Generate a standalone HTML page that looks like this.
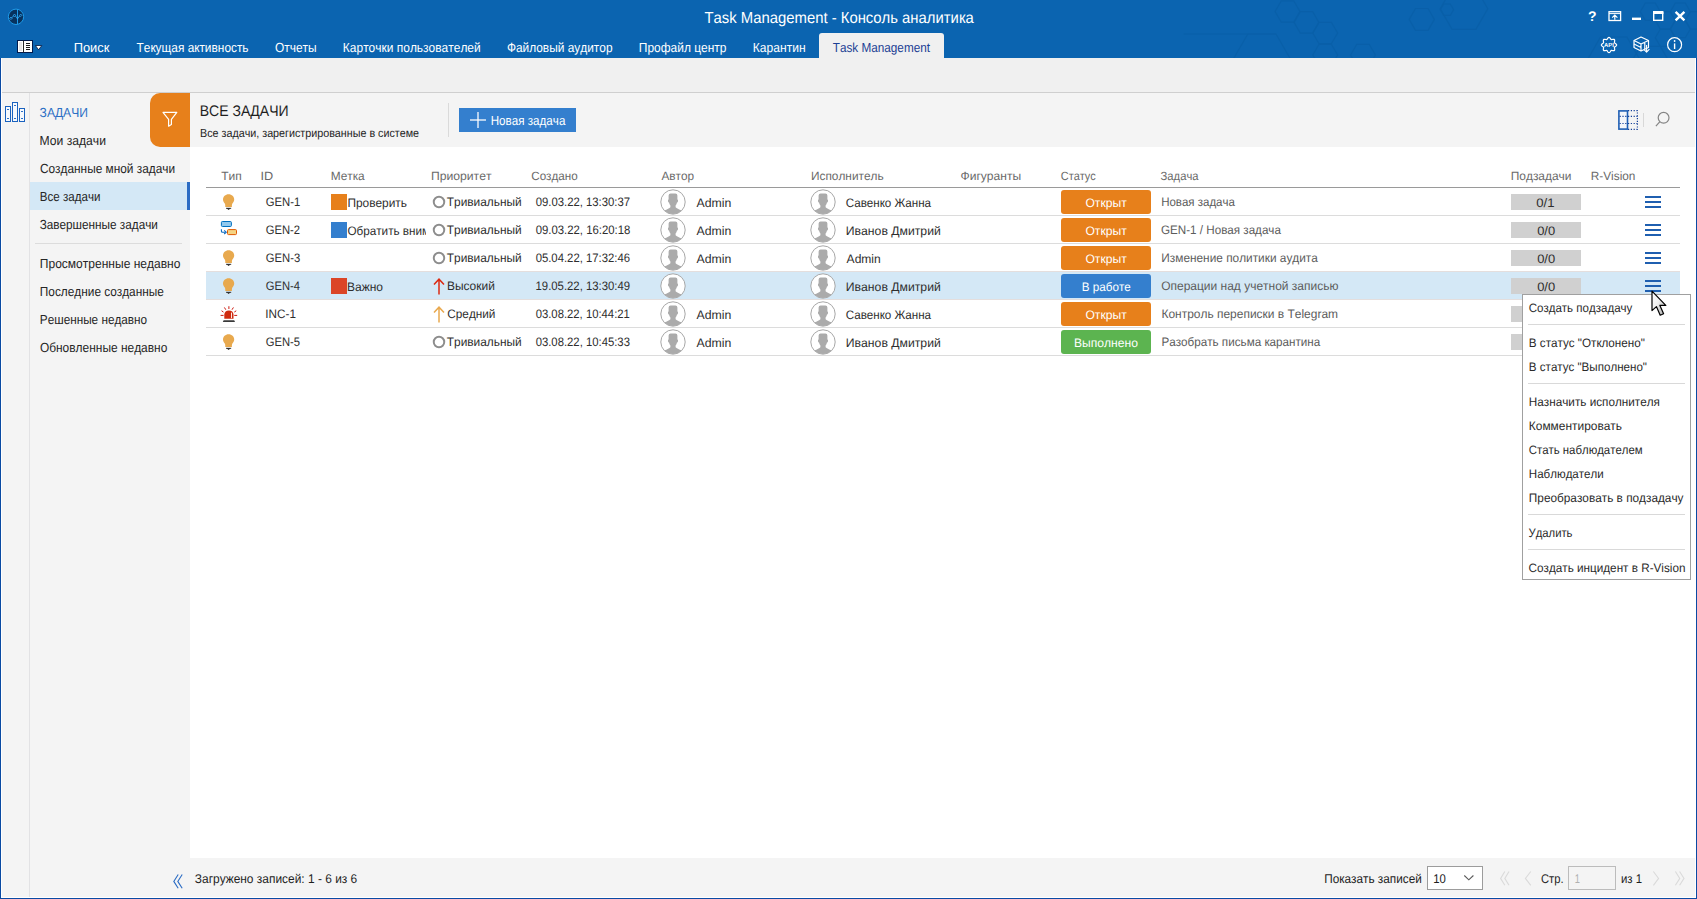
<!DOCTYPE html>
<html lang="ru">
<head>
<meta charset="utf-8">
<title>Task Management - Консоль аналитика</title>
<style>
*{box-sizing:border-box;margin:0;padding:0}
html,body{width:1697px;height:899px;overflow:hidden;background:#f4f4f4}
body{position:relative;font-family:"Liberation Sans",sans-serif;font-kerning:none;text-rendering:geometricPrecision;-webkit-font-smoothing:antialiased}
.a{position:absolute}
.t{position:absolute;white-space:nowrap;line-height:1;transform-origin:0 0;display:block}
svg{position:absolute;overflow:visible}
#hdr{left:0;top:0;width:1697px;height:58px;background:#0b64b0;overflow:hidden}
#ribbon{left:2px;top:58px;width:1693px;height:34px;background:#f0f0f0}
#ribline{left:2px;top:92px;width:1693px;height:1px;background:#cfcfcf}
#main{left:2px;top:93px;width:1693px;height:804px;background:#f4f4f4}
#white{left:190px;top:147px;width:1505px;height:711px;background:#fff}
#bl{left:0;top:58px;width:1px;height:841px;background:#0a4aa3}
#br{left:1696px;top:58px;width:1px;height:841px;background:#0a4aa3}
#bb{left:0;top:898px;width:1697px;height:1px;background:#0a4aa3}
#wl{left:1px;top:58px;width:1px;height:840px;background:#fff}
#wr{left:1695px;top:58px;width:1px;height:840px;background:#fff}
#wb{left:1px;top:897px;width:1695px;height:1px;background:#fff}
#tab{left:819px;top:33px;width:125px;height:25px;background:#f0f0f0;border-radius:3px 3px 0 0}
#vsep{left:29px;top:93px;width:1px;height:804px;background:#e2e2e4}
#sel{left:30px;top:182px;width:157px;height:28px;background:#d4e8f6}
#selbar{left:187px;top:182px;width:3px;height:28px;background:#2b6cc4}
#sdiv{left:35px;top:243px;width:147px;height:1px;background:#dcdcdc}
#filter{left:150px;top:93px;width:40px;height:54px;background:#e7801b;border-radius:10px 0 0 10px}
#hsep{left:448px;top:103px;width:1px;height:34px;background:#dadada}
#newbtn{left:459px;top:108px;width:117px;height:24px;background:#347fce}
#tsep{left:1643px;top:113px;width:1px;height:14px;background:#d8d8d8}
.hl{left:206px;width:1474px;height:1px;background:#dcdcdc}
#hline{left:206px;top:187px;width:1474px;height:1px;background:#9a9a9a}
#rowsel{left:206px;top:271px;width:1474px;height:29px;background:#d4e8f6}
.bdg{left:1061px;width:90px;height:24px;border-radius:3px}
.sq{left:331px;width:16px;height:16px}
.bar{left:1511px;width:70px;height:16px;background:#d0d0d0}
.hb{left:1645px;width:16px;height:2px;background:#1f5fb0}
#menu{left:1522px;top:294px;width:169px;height:286px;background:#fff;border:1px solid #a0a0a0}
.ms{left:1528px;width:157px;height:1px;background:#d9d9d9}
#selbox{left:1427px;top:866px;width:56px;height:24px;background:#fff;border:1px solid #9c9c9c}
#pgbox{left:1568px;top:866px;width:48px;height:24px;background:#f4f4f4;border:1px solid #bcbcbc}
</style>
</head>
<body>
<div id="hdr" class="a">
<svg width="1697" height="58" viewBox="0 0 1697 58" style="left:0;top:0" fill="none" stroke="#075a9f" stroke-width="1.2" opacity=".4">
<polygon points="1275.1,11.5 1281.3,0.8 1293.7,0.8 1299.9,11.5 1293.7,22.2 1281.3,22.2"/>
<polygon points="1294.1,22.4 1300.3,11.7 1312.7,11.7 1318.9,22.4 1312.7,33.1 1300.3,33.1"/>
<polygon points="1312.8,33.0 1319.0,22.3 1331.4,22.3 1337.6,33.0 1331.4,43.7 1319.0,43.7"/>
<polygon points="1312.8,55.0 1319.0,44.3 1331.4,44.3 1337.6,55.0 1331.4,65.7 1319.0,65.7"/>
<polygon points="1350.6,55.0 1356.8,44.3 1369.2,44.3 1375.4,55.0 1369.2,65.7 1356.8,65.7"/>
<polygon points="1233.7,58.4 1247.8,34.0 1276.0,34.0 1290.1,58.4 1276.0,82.8 1247.8,82.8"/>
<polygon points="1409.2,19.4 1415.5,8.5 1428.1,8.5 1434.4,19.4 1428.1,30.3 1415.5,30.3"/>
<polygon points="1440.2,8.8 1452.1,-11.9 1475.9,-11.9 1487.8,8.8 1475.9,29.4 1452.1,29.4"/>
<polygon points="1440.4,9.7 1443.7,4.0 1450.3,4.0 1453.6,9.7 1450.3,15.4 1443.7,15.4"/>
<polygon points="1640.3,11.7 1645.3,3.0 1655.3,3.0 1660.3,11.7 1655.3,20.4 1645.3,20.4"/>
<polygon points="1655.3,20.4 1660.3,11.7 1670.3,11.7 1675.3,20.4 1670.3,29.1 1660.3,29.1"/>
<polygon points="1670.3,11.7 1675.3,3.0 1685.3,3.0 1690.3,11.7 1685.3,20.4 1675.3,20.4"/>
<polygon points="1670.3,29.0 1675.3,20.3 1685.3,20.3 1690.3,29.0 1685.3,37.7 1675.3,37.7"/>
<polygon points="1655.3,37.7 1660.3,29.0 1670.3,29.0 1675.3,37.7 1670.3,46.4 1660.3,46.4"/>
<polygon points="1685.3,20.4 1690.3,11.7 1700.3,11.7 1705.3,20.4 1700.3,29.1 1690.3,29.1"/>
<polygon points="1587.4,59.8 1600.5,37.0 1626.9,37.0 1640.0,59.8 1626.9,82.6 1600.5,82.6"/>
<polygon points="1630.3,63.7 1640.3,46.4 1660.3,46.4 1670.3,63.7 1660.3,81.0 1640.3,81.0"/>
<line x1="1183.6" y1="34" x2="1276" y2="34"/>
</svg>
</div>
<div id="tab" class="a"></div>
<!-- app logo -->
<svg width="18" height="18" viewBox="0 0 18 18" style="left:7px;top:8px">
<circle cx="9" cy="8.8" r="7.7" fill="#07325e" stroke="#1e9bea" stroke-width="1"/>
<line x1="10.5" y1="1.2" x2="10.5" y2="16.4" stroke="#1e9bea" stroke-width="1"/>
<polyline points="3.9,10.3 7.5,7.3 10.5,10.1 13.7,7.3" fill="none" stroke="#2aa6f2" stroke-width=".9"/>
<g fill="#07325e" stroke="#35b0ff" stroke-width=".8"><path d="M3.9 9.1L5.1 10.3L3.9 11.5L2.7 10.3Z"/><path d="M7.5 6.1L8.7 7.3L7.5 8.5L6.3 7.3Z"/><path d="M13.7 6.1L14.9 7.3L13.7 8.5L12.5 7.3Z"/></g>
<path d="M9.5 9.6L10.5 10.8L11.5 9.6" fill="none" stroke="#35b0ff" stroke-width=".9"/>
</svg>
<!-- quick menu icon -->
<svg width="26" height="14" viewBox="0 0 26 14" style="left:17px;top:40px">
<rect x=".5" y=".5" width="15" height="12" fill="#fff" stroke="#001a4d" stroke-width="1"/>
<rect x="2" y="2" width="3" height="9" fill="#e6e6e6"/>
<line x1="6.5" y1=".5" x2="6.5" y2="12.5" stroke="#2a2a2a" stroke-width="1"/>
<g stroke="#1a1a1a" stroke-width="1"><line x1="9" y1="3.5" x2="13" y2="3.5"/><line x1="9" y1="5.5" x2="13" y2="5.5"/><line x1="9" y1="7.5" x2="13" y2="7.5"/><line x1="9" y1="9.5" x2="13" y2="9.5"/></g>
<polygon points="18.4,5.5 24.8,5.5 21.6,9.8" fill="#fff" stroke="#00143c" stroke-width=".8"/>
</svg>
<!-- window controls -->
<svg width="100" height="12" viewBox="0 0 100 12" style="left:1587px;top:10px" fill="none" stroke="#fff">
<text x="1" y="11" font-family="Liberation Sans, sans-serif" font-weight="700" font-size="14" fill="#fff" stroke="none">?</text>
<rect x="22" y="1.7" width="11.6" height="8.8" stroke-width="1.3"/><line x1="22" y1="3.6" x2="33.6" y2="3.6" stroke-width="1"/><path d="M27.8 9.8V5.4M25.2 7.6L27.8 5L30.4 7.6" stroke-width="1.2"/>
<rect x="45" y="7.6" width="9" height="2.4" fill="#fff" stroke="none"/>
<rect x="66.7" y="2.5" width="9" height="7.8" stroke-width="1.4"/><rect x="66" y="1" width="10.4" height="3" fill="#fff" stroke="none"/>
<path d="M88.6 1.8L97.4 10.4M97.4 1.8L88.6 10.4" stroke-width="2.4"/>
</svg>
<!-- API gear -->
<svg width="18" height="18" viewBox="-9 -9 18 18" style="left:1600px;top:36px" fill="none" stroke="#fff" stroke-width="1.2">
<path d="M7.60,0.00L7.47,0.49L7.11,0.94L6.62,1.32L6.11,1.64L5.69,1.93L5.45,2.26L5.39,2.66L5.48,3.16L5.61,3.75L5.69,4.37L5.63,4.94L5.37,5.37L4.94,5.63L4.37,5.69L3.75,5.61L3.16,5.48L2.66,5.39L2.26,5.45L1.93,5.69L1.64,6.11L1.32,6.62L0.94,7.11L0.49,7.47L0.00,7.60L-0.49,7.47L-0.94,7.11L-1.32,6.62L-1.64,6.11L-1.93,5.69L-2.26,5.45L-2.66,5.39L-3.16,5.48L-3.75,5.61L-4.37,5.69L-4.94,5.63L-5.37,5.37L-5.63,4.94L-5.69,4.37L-5.61,3.75L-5.48,3.16L-5.39,2.66L-5.45,2.26L-5.69,1.93L-6.11,1.64L-6.62,1.32L-7.11,0.94L-7.47,0.49L-7.60,0.00L-7.47,-0.49L-7.11,-0.94L-6.62,-1.32L-6.11,-1.64L-5.69,-1.93L-5.45,-2.26L-5.39,-2.66L-5.48,-3.16L-5.61,-3.75L-5.69,-4.37L-5.63,-4.94L-5.37,-5.37L-4.94,-5.63L-4.37,-5.69L-3.75,-5.61L-3.16,-5.48L-2.66,-5.39L-2.26,-5.45L-1.93,-5.69L-1.64,-6.11L-1.32,-6.62L-0.94,-7.11L-0.49,-7.47L-0.00,-7.60L0.49,-7.47L0.94,-7.11L1.32,-6.62L1.64,-6.11L1.93,-5.69L2.26,-5.45L2.66,-5.39L3.16,-5.48L3.75,-5.61L4.37,-5.69L4.94,-5.63L5.37,-5.37L5.63,-4.94L5.69,-4.37L5.61,-3.75L5.48,-3.16L5.39,-2.66L5.45,-2.26L5.69,-1.93L6.11,-1.64L6.62,-1.32L7.11,-0.94L7.47,-0.49Z" stroke-linejoin="round"/>
<text x="0" y="2.1" text-anchor="middle" font-family="Liberation Sans, sans-serif" font-weight="700" font-size="5.9" fill="#fff" stroke="none">API</text>
</svg>
<!-- cube -->
<svg width="18" height="17" viewBox="0 0 18 17" style="left:1633px;top:36px" fill="none" stroke="#fff" stroke-width="1.2" stroke-linejoin="round">
<path d="M1 4.5L8 1L15.5 4.5V11.5L8 15L1 11.5Z"/><path d="M1 4.5L8 8L15.5 4.5M8 8V15M1 8L8 11.5M11.8 6.2V13.2"/>
<path d="M13.6 9V16M11 13.6L13.6 16.2L16.4 13.2" stroke-width="1.1"/>
</svg>
<!-- info -->
<svg width="16" height="16" viewBox="0 0 16 16" style="left:1667px;top:37px" fill="none" stroke="#fff">
<circle cx="7.6" cy="7.7" r="7" stroke-width="1.2"/><line x1="7.6" y1="6.4" x2="7.6" y2="12" stroke-width="1.4"/><circle cx="7.6" cy="4" r=".9" fill="#fff" stroke="none"/>
</svg>

<div id="ribbon" class="a"></div><div id="ribline" class="a"></div>
<div id="main" class="a"></div>
<div id="white" class="a"></div>
<div id="vsep" class="a"></div>
<div id="sel" class="a"></div><div id="selbar" class="a"></div><div id="sdiv" class="a"></div>
<div id="filter" class="a"></div>
<!-- sidebar bars icon -->
<svg width="22" height="21" viewBox="0 0 22 21" style="left:4px;top:102px" fill="#f6f9fd" stroke="#1a62bf" stroke-width="1.15" shape-rendering="crispEdges">
<rect x="1.5" y="4.5" width="5" height="15"/><rect x="8.5" y=".5" width="5" height="19"/><rect x="15.5" y="6.5" width="5" height="13"/>
<g stroke-width="1" stroke="#2b6fc6"><line x1="3" y1="7.5" x2="5" y2="7.5"/><line x1="10" y1="3.5" x2="12" y2="3.5"/><line x1="17" y1="9.5" x2="19" y2="9.5"/><line x1="3" y1="16.5" x2="5" y2="16.5"/><line x1="10" y1="16.5" x2="12" y2="16.5"/><line x1="17" y1="16.5" x2="19" y2="16.5"/></g>
</svg>
<!-- funnel -->
<svg width="16" height="16" viewBox="0 0 16 16" style="left:162px;top:111px" fill="none" stroke="#fff" stroke-width="1.2" stroke-linejoin="round">
<path d="M1 1.4H14.8L9.4 8.4V13.6L6.6 15.2V8.4Z"/>
</svg>
<div id="hsep" class="a"></div>
<div id="newbtn" class="a"></div>
<svg width="16" height="16" viewBox="0 0 16 16" style="left:470px;top:112px" stroke="#fff" stroke-opacity=".85" stroke-width="1.5"><line x1="8" y1="0" x2="8" y2="16"/><line x1="0" y1="8" x2="16" y2="8"/></svg>
<!-- toolbar right icons -->
<svg width="22" height="21" viewBox="0 0 22 21" style="left:1617px;top:109px" fill="none" stroke="#1f5fb4">
<rect x="1.9" y="1.9" width="8.6" height="18.2" stroke-width="1.6" fill="#f4f6fa"/>
<g stroke-width="1.2" stroke-dasharray="1.2 1.6" stroke="#14409a"><path d="M11 1.6H20.4V20.4H11"/><line x1="2.6" y1="7.4" x2="20.4" y2="7.4"/><line x1="2.6" y1="14.5" x2="20.4" y2="14.5"/></g>
</svg>
<div id="tsep" class="a"></div>
<svg width="16" height="16" viewBox="0 0 16 16" style="left:1655px;top:111px" fill="none" stroke="#858585" stroke-width="1.2"><circle cx="8.6" cy="6.8" r="5.4"/><line x1="4.7" y1="10.8" x2=".9" y2="15.1"/></svg>

<!-- table -->
<div id="hline" class="a"></div>
<div id="rowsel" class="a"></div>
<div class="a hl" style="top:215px"></div>
<div class="a hl" style="top:243px"></div>
<div class="a hl" style="top:271px;background:#e4dedd"></div>
<div class="a hl" style="top:299px;background:#e4dedd"></div>
<div class="a hl" style="top:327px"></div>
<div class="a hl" style="top:355px"></div>
<svg width="13" height="17" viewBox="0 0 13 17" style="left:222px;top:194px"><path d="M6.6 .2C3.4 .2 1 2.5 1 5.4C1 7.3 2 8.4 2.8 9.6C3.3 10.4 3.3 11.4 3.3 13H9.9C9.9 11.4 9.9 10.4 10.4 9.6C11.2 8.4 12.2 7.3 12.2 5.4C12.2 2.5 9.8 .2 6.6 .2Z" fill="#e8a94e"/><path d="M4.2 14.1H9L6.6 16.1Z" fill="#333"/><rect x="4" y="13.8" width="5.2" height=".9" fill="#333"/></svg>
<div class="a sq" style="top:194px;background:#e7801b"></div>
<svg width="14" height="14" viewBox="0 0 14 14" style="left:432px;top:195px"><circle cx="7" cy="7" r="5.25" fill="none" stroke="#8d8d8d" stroke-width="1.95"/></svg>
<svg width="26" height="26" viewBox="0 0 26 26" style="left:660.4px;top:188.5px"><defs><clipPath id="c1"><circle cx="13" cy="13" r="12"/></clipPath></defs><circle cx="13" cy="13" r="12.2" fill="#fff" stroke="#a2a2a2" stroke-width=".95"/><g clip-path="url(#c1)" fill="#ababab"><path d="M8.6 6.6Q8.6 4.6 10.6 4.6H15.4Q17.4 4.6 17.4 6.6V10.6Q18.2 10.8 18 12.2Q17.8 13.4 17 13.6Q16.6 15.6 15.6 16.4V18.2Q17 19.6 22 21.6L24 26H2L4 21.6Q9 19.6 10.4 18.2V16.4Q9.4 15.6 9 13.6Q8.2 13.4 8 12.2Q7.8 10.8 8.6 10.6Z"/></g></svg>
<svg width="26" height="26" viewBox="0 0 26 26" style="left:810.4px;top:188.5px"><defs><clipPath id="c2"><circle cx="13" cy="13" r="12"/></clipPath></defs><circle cx="13" cy="13" r="12.2" fill="#fff" stroke="#a2a2a2" stroke-width=".95"/><g clip-path="url(#c2)" fill="#ababab"><path d="M8.6 6.6Q8.6 4.6 10.6 4.6H15.4Q17.4 4.6 17.4 6.6V10.6Q18.2 10.8 18 12.2Q17.8 13.4 17 13.6Q16.6 15.6 15.6 16.4V18.2Q17 19.6 22 21.6L24 26H2L4 21.6Q9 19.6 10.4 18.2V16.4Q9.4 15.6 9 13.6Q8.2 13.4 8 12.2Q7.8 10.8 8.6 10.6Z"/></g></svg>
<div class="a bdg" style="top:190px;background:#e7801b"></div>
<div class="a bar" style="top:194px"></div>
<div class="a hb" style="top:196px"></div>
<div class="a hb" style="top:201px"></div>
<div class="a hb" style="top:206px"></div>
<svg width="18" height="15" viewBox="0 0 18 15" style="left:220px;top:221px"><rect x="1.4" y=".5" width="10" height="5" rx="1" fill="#93c9ed" stroke="#0070c0" stroke-width="1"/><rect x="7.5" y="8.6" width="9" height="5" rx="1" fill="#f5d484" stroke="#e05a00" stroke-width="1"/><path d="M1.4 8.2V10.2Q1.4 11.2 2.6 11.2H5" fill="none" stroke="#0a6ac0" stroke-width="1.1"/><path d="M4.2 9.4L6.2 11.2L4.2 13" fill="none" stroke="#0a6ac0" stroke-width="1.1"/></svg>
<div class="a sq" style="top:222px;background:#347fce"></div>
<svg width="14" height="14" viewBox="0 0 14 14" style="left:432px;top:223px"><circle cx="7" cy="7" r="5.25" fill="none" stroke="#8d8d8d" stroke-width="1.95"/></svg>
<svg width="26" height="26" viewBox="0 0 26 26" style="left:660.4px;top:216.5px"><defs><clipPath id="c3"><circle cx="13" cy="13" r="12"/></clipPath></defs><circle cx="13" cy="13" r="12.2" fill="#fff" stroke="#a2a2a2" stroke-width=".95"/><g clip-path="url(#c3)" fill="#ababab"><path d="M8.6 6.6Q8.6 4.6 10.6 4.6H15.4Q17.4 4.6 17.4 6.6V10.6Q18.2 10.8 18 12.2Q17.8 13.4 17 13.6Q16.6 15.6 15.6 16.4V18.2Q17 19.6 22 21.6L24 26H2L4 21.6Q9 19.6 10.4 18.2V16.4Q9.4 15.6 9 13.6Q8.2 13.4 8 12.2Q7.8 10.8 8.6 10.6Z"/></g></svg>
<svg width="26" height="26" viewBox="0 0 26 26" style="left:810.4px;top:216.5px"><defs><clipPath id="c4"><circle cx="13" cy="13" r="12"/></clipPath></defs><circle cx="13" cy="13" r="12.2" fill="#fff" stroke="#a2a2a2" stroke-width=".95"/><g clip-path="url(#c4)" fill="#ababab"><path d="M8.6 6.6Q8.6 4.6 10.6 4.6H15.4Q17.4 4.6 17.4 6.6V10.6Q18.2 10.8 18 12.2Q17.8 13.4 17 13.6Q16.6 15.6 15.6 16.4V18.2Q17 19.6 22 21.6L24 26H2L4 21.6Q9 19.6 10.4 18.2V16.4Q9.4 15.6 9 13.6Q8.2 13.4 8 12.2Q7.8 10.8 8.6 10.6Z"/></g></svg>
<div class="a bdg" style="top:218px;background:#e7801b"></div>
<div class="a bar" style="top:222px"></div>
<div class="a hb" style="top:224px"></div>
<div class="a hb" style="top:229px"></div>
<div class="a hb" style="top:234px"></div>
<svg width="13" height="17" viewBox="0 0 13 17" style="left:222px;top:250px"><path d="M6.6 .2C3.4 .2 1 2.5 1 5.4C1 7.3 2 8.4 2.8 9.6C3.3 10.4 3.3 11.4 3.3 13H9.9C9.9 11.4 9.9 10.4 10.4 9.6C11.2 8.4 12.2 7.3 12.2 5.4C12.2 2.5 9.8 .2 6.6 .2Z" fill="#e8a94e"/><path d="M4.2 14.1H9L6.6 16.1Z" fill="#333"/><rect x="4" y="13.8" width="5.2" height=".9" fill="#333"/></svg>
<svg width="14" height="14" viewBox="0 0 14 14" style="left:432px;top:251px"><circle cx="7" cy="7" r="5.25" fill="none" stroke="#8d8d8d" stroke-width="1.95"/></svg>
<svg width="26" height="26" viewBox="0 0 26 26" style="left:660.4px;top:244.5px"><defs><clipPath id="c5"><circle cx="13" cy="13" r="12"/></clipPath></defs><circle cx="13" cy="13" r="12.2" fill="#fff" stroke="#a2a2a2" stroke-width=".95"/><g clip-path="url(#c5)" fill="#ababab"><path d="M8.6 6.6Q8.6 4.6 10.6 4.6H15.4Q17.4 4.6 17.4 6.6V10.6Q18.2 10.8 18 12.2Q17.8 13.4 17 13.6Q16.6 15.6 15.6 16.4V18.2Q17 19.6 22 21.6L24 26H2L4 21.6Q9 19.6 10.4 18.2V16.4Q9.4 15.6 9 13.6Q8.2 13.4 8 12.2Q7.8 10.8 8.6 10.6Z"/></g></svg>
<svg width="26" height="26" viewBox="0 0 26 26" style="left:810.4px;top:244.5px"><defs><clipPath id="c6"><circle cx="13" cy="13" r="12"/></clipPath></defs><circle cx="13" cy="13" r="12.2" fill="#fff" stroke="#a2a2a2" stroke-width=".95"/><g clip-path="url(#c6)" fill="#ababab"><path d="M8.6 6.6Q8.6 4.6 10.6 4.6H15.4Q17.4 4.6 17.4 6.6V10.6Q18.2 10.8 18 12.2Q17.8 13.4 17 13.6Q16.6 15.6 15.6 16.4V18.2Q17 19.6 22 21.6L24 26H2L4 21.6Q9 19.6 10.4 18.2V16.4Q9.4 15.6 9 13.6Q8.2 13.4 8 12.2Q7.8 10.8 8.6 10.6Z"/></g></svg>
<div class="a bdg" style="top:246px;background:#e7801b"></div>
<div class="a bar" style="top:250px"></div>
<div class="a hb" style="top:252px"></div>
<div class="a hb" style="top:257px"></div>
<div class="a hb" style="top:262px"></div>
<svg width="13" height="17" viewBox="0 0 13 17" style="left:222px;top:278px"><path d="M6.6 .2C3.4 .2 1 2.5 1 5.4C1 7.3 2 8.4 2.8 9.6C3.3 10.4 3.3 11.4 3.3 13H9.9C9.9 11.4 9.9 10.4 10.4 9.6C11.2 8.4 12.2 7.3 12.2 5.4C12.2 2.5 9.8 .2 6.6 .2Z" fill="#e8a94e"/><path d="M4.2 14.1H9L6.6 16.1Z" fill="#333"/><rect x="4" y="13.8" width="5.2" height=".9" fill="#333"/></svg>
<div class="a sq" style="top:278px;background:#db4527"></div>
<svg width="12" height="17" viewBox="0 0 12 17" style="left:433px;top:278px" fill="none" stroke="#dc2a12" stroke-width="1.5"><path d="M6 16.4V1.4M1 6.6L6 1.2L11 6.6"/></svg>
<svg width="26" height="26" viewBox="0 0 26 26" style="left:660.4px;top:272.5px"><defs><clipPath id="c7"><circle cx="13" cy="13" r="12"/></clipPath></defs><circle cx="13" cy="13" r="12.2" fill="#fff" stroke="#a2a2a2" stroke-width=".95"/><g clip-path="url(#c7)" fill="#ababab"><path d="M8.6 6.6Q8.6 4.6 10.6 4.6H15.4Q17.4 4.6 17.4 6.6V10.6Q18.2 10.8 18 12.2Q17.8 13.4 17 13.6Q16.6 15.6 15.6 16.4V18.2Q17 19.6 22 21.6L24 26H2L4 21.6Q9 19.6 10.4 18.2V16.4Q9.4 15.6 9 13.6Q8.2 13.4 8 12.2Q7.8 10.8 8.6 10.6Z"/></g></svg>
<svg width="26" height="26" viewBox="0 0 26 26" style="left:810.4px;top:272.5px"><defs><clipPath id="c8"><circle cx="13" cy="13" r="12"/></clipPath></defs><circle cx="13" cy="13" r="12.2" fill="#fff" stroke="#a2a2a2" stroke-width=".95"/><g clip-path="url(#c8)" fill="#ababab"><path d="M8.6 6.6Q8.6 4.6 10.6 4.6H15.4Q17.4 4.6 17.4 6.6V10.6Q18.2 10.8 18 12.2Q17.8 13.4 17 13.6Q16.6 15.6 15.6 16.4V18.2Q17 19.6 22 21.6L24 26H2L4 21.6Q9 19.6 10.4 18.2V16.4Q9.4 15.6 9 13.6Q8.2 13.4 8 12.2Q7.8 10.8 8.6 10.6Z"/></g></svg>
<div class="a bdg" style="top:274px;background:#347fce"></div>
<div class="a bar" style="top:278px"></div>
<div class="a hb" style="top:280px"></div>
<div class="a hb" style="top:285px"></div>
<div class="a hb" style="top:290px"></div>
<svg width="18" height="17" viewBox="0 0 18 17" style="left:220px;top:306px"><path d="M4.3 12.8V8.6C4.3 5.9 6.3 4.4 8.9 4.4C11.5 4.4 13.5 5.9 13.5 8.6V12.8Z" fill="#cf2a0e"/><rect x="11" y="6.6" width=".9" height="5.6" fill="#fff"/><path d="M3.6 14.2H14.2L15 15.9H2.8Z" fill="#3a3a3a"/><g stroke="#cc1a10" stroke-width="1" stroke-linecap="round"><line x1="8.9" y1=".6" x2="8.9" y2="2.6"/><line x1="4.6" y1="1.8" x2="5.6" y2="3.4"/><line x1="13.2" y1="1.8" x2="12.2" y2="3.4"/><line x1="1.9" y1="5" x2="3.2" y2="5.9"/><line x1="15.9" y1="5" x2="14.6" y2="5.9"/><line x1="1" y1="9.4" x2="3.2" y2="9.4"/><line x1="14.6" y1="9.4" x2="16.8" y2="9.4"/></g></svg>
<svg width="12" height="17" viewBox="0 0 12 17" style="left:433px;top:306px" fill="none" stroke="#e9a94f" stroke-width="1.5"><path d="M6 16.4V1.4M1 6.6L6 1.2L11 6.6"/></svg>
<svg width="26" height="26" viewBox="0 0 26 26" style="left:660.4px;top:300.5px"><defs><clipPath id="c9"><circle cx="13" cy="13" r="12"/></clipPath></defs><circle cx="13" cy="13" r="12.2" fill="#fff" stroke="#a2a2a2" stroke-width=".95"/><g clip-path="url(#c9)" fill="#ababab"><path d="M8.6 6.6Q8.6 4.6 10.6 4.6H15.4Q17.4 4.6 17.4 6.6V10.6Q18.2 10.8 18 12.2Q17.8 13.4 17 13.6Q16.6 15.6 15.6 16.4V18.2Q17 19.6 22 21.6L24 26H2L4 21.6Q9 19.6 10.4 18.2V16.4Q9.4 15.6 9 13.6Q8.2 13.4 8 12.2Q7.8 10.8 8.6 10.6Z"/></g></svg>
<svg width="26" height="26" viewBox="0 0 26 26" style="left:810.4px;top:300.5px"><defs><clipPath id="c10"><circle cx="13" cy="13" r="12"/></clipPath></defs><circle cx="13" cy="13" r="12.2" fill="#fff" stroke="#a2a2a2" stroke-width=".95"/><g clip-path="url(#c10)" fill="#ababab"><path d="M8.6 6.6Q8.6 4.6 10.6 4.6H15.4Q17.4 4.6 17.4 6.6V10.6Q18.2 10.8 18 12.2Q17.8 13.4 17 13.6Q16.6 15.6 15.6 16.4V18.2Q17 19.6 22 21.6L24 26H2L4 21.6Q9 19.6 10.4 18.2V16.4Q9.4 15.6 9 13.6Q8.2 13.4 8 12.2Q7.8 10.8 8.6 10.6Z"/></g></svg>
<div class="a bdg" style="top:302px;background:#e7801b"></div>
<div class="a bar" style="top:306px"></div>
<svg width="13" height="17" viewBox="0 0 13 17" style="left:222px;top:334px"><path d="M6.6 .2C3.4 .2 1 2.5 1 5.4C1 7.3 2 8.4 2.8 9.6C3.3 10.4 3.3 11.4 3.3 13H9.9C9.9 11.4 9.9 10.4 10.4 9.6C11.2 8.4 12.2 7.3 12.2 5.4C12.2 2.5 9.8 .2 6.6 .2Z" fill="#e8a94e"/><path d="M4.2 14.1H9L6.6 16.1Z" fill="#333"/><rect x="4" y="13.8" width="5.2" height=".9" fill="#333"/></svg>
<svg width="14" height="14" viewBox="0 0 14 14" style="left:432px;top:335px"><circle cx="7" cy="7" r="5.25" fill="none" stroke="#8d8d8d" stroke-width="1.95"/></svg>
<svg width="26" height="26" viewBox="0 0 26 26" style="left:660.4px;top:328.5px"><defs><clipPath id="c11"><circle cx="13" cy="13" r="12"/></clipPath></defs><circle cx="13" cy="13" r="12.2" fill="#fff" stroke="#a2a2a2" stroke-width=".95"/><g clip-path="url(#c11)" fill="#ababab"><path d="M8.6 6.6Q8.6 4.6 10.6 4.6H15.4Q17.4 4.6 17.4 6.6V10.6Q18.2 10.8 18 12.2Q17.8 13.4 17 13.6Q16.6 15.6 15.6 16.4V18.2Q17 19.6 22 21.6L24 26H2L4 21.6Q9 19.6 10.4 18.2V16.4Q9.4 15.6 9 13.6Q8.2 13.4 8 12.2Q7.8 10.8 8.6 10.6Z"/></g></svg>
<svg width="26" height="26" viewBox="0 0 26 26" style="left:810.4px;top:328.5px"><defs><clipPath id="c12"><circle cx="13" cy="13" r="12"/></clipPath></defs><circle cx="13" cy="13" r="12.2" fill="#fff" stroke="#a2a2a2" stroke-width=".95"/><g clip-path="url(#c12)" fill="#ababab"><path d="M8.6 6.6Q8.6 4.6 10.6 4.6H15.4Q17.4 4.6 17.4 6.6V10.6Q18.2 10.8 18 12.2Q17.8 13.4 17 13.6Q16.6 15.6 15.6 16.4V18.2Q17 19.6 22 21.6L24 26H2L4 21.6Q9 19.6 10.4 18.2V16.4Q9.4 15.6 9 13.6Q8.2 13.4 8 12.2Q7.8 10.8 8.6 10.6Z"/></g></svg>
<div class="a bdg" style="top:330px;background:#5cb450"></div>
<div class="a bar" style="top:334px"></div>
<!-- footer -->
<svg width="10" height="15" viewBox="0 0 10 15" style="left:173px;top:873.5px" fill="none" stroke="#2b6cc4" stroke-width="1.1"><path d="M5.2 .5L.8 7.4L5.2 14.3M9.2 .5L4.8 7.4L9.2 14.3"/></svg>
<div id="selbox" class="a"></div>
<svg width="10" height="6" viewBox="0 0 10 6" style="left:1464.4px;top:875.3px" fill="none" stroke="#5a5a5a" stroke-width="1.1"><path d="M.3 .5L4.8 4.8L9.4 .5"/></svg>
<div id="pgbox" class="a"></div>
<svg width="190" height="15" viewBox="0 0 190 15" style="left:1500px;top:870.5px" fill="none" stroke="#dadada" stroke-width="1.1">
<path d="M4.8 .5L.6 7.4L4.8 14.3M9 .5L4.8 7.4L9 14.3"/><path d="M30.8 .5L25.4 7.4L30.8 14.3"/>
<path d="M153.4 .5L158.6 7.4L153.4 14.3"/><path d="M175.4 .5L179.8 7.4L175.4 14.3M179.6 .5L184 7.4L179.6 14.3"/>
</svg>
<!-- context menu -->
<div id="menu" class="a"></div>
<div class="a ms" style="top:324px"></div><div class="a ms" style="top:383px"></div><div class="a ms" style="top:514px"></div><div class="a ms" style="top:549px"></div>
<span class="t" style="left:704px;top:11px;font-size:16.0px;color:#fff;transform:translateX(0.53px) scaleX(0.9284);">Task Management - Консоль аналитика</span>
<span class="t" style="left:73px;top:41px;font-size:13.2px;color:#fff;transform:translateX(0.72px) scaleX(0.9752);">Поиск</span>
<span class="t" style="left:136px;top:41px;font-size:13.2px;color:#fff;transform:translateX(0.53px) scaleX(0.9006);">Текущая активность</span>
<span class="t" style="left:274px;top:41px;font-size:13.2px;color:#fff;transform:translateX(0.97px) scaleX(0.9061);">Отчеты</span>
<span class="t" style="left:342px;top:41px;font-size:13.2px;color:#fff;transform:translateX(0.86px) scaleX(0.9073);">Карточки пользователей</span>
<span class="t" style="left:506px;top:41px;font-size:13.2px;color:#fff;transform:translateX(0.95px) scaleX(0.9029);">Файловый аудитор</span>
<span class="t" style="left:638px;top:41px;font-size:13.2px;color:#fff;transform:translateX(0.81px) scaleX(0.9076);">Профайл центр</span>
<span class="t" style="left:752px;top:41px;font-size:13.2px;color:#fff;transform:translateX(0.84px) scaleX(0.9153);">Карантин</span>
<span class="t" style="left:832px;top:41px;font-size:13.2px;color:#1c3f94;transform:translateX(0.80px) scaleX(0.8896);">Task Management</span>
<span class="t" style="left:39px;top:106px;font-size:13.2px;color:#2b6fc4;transform:translateX(0.62px) scaleX(0.9146);">ЗАДАЧИ</span>
<span class="t" style="left:39px;top:134px;font-size:13.2px;color:#262626;transform:translateX(0.61px) scaleX(0.9216);">Мои задачи</span>
<span class="t" style="left:39px;top:162px;font-size:13.2px;color:#262626;transform:translateX(0.94px) scaleX(0.8988);">Созданные мной задачи</span>
<span class="t" style="left:39px;top:190px;font-size:13.2px;color:#262626;transform:translateX(0.83px) scaleX(0.8778);">Все задачи</span>
<span class="t" style="left:39px;top:218px;font-size:13.2px;color:#262626;transform:translateX(0.63px) scaleX(0.8923);">Завершенные задачи</span>
<span class="t" style="left:39px;top:257px;font-size:13.2px;color:#262626;transform:translateX(0.79px) scaleX(0.9124);">Просмотренные недавно</span>
<span class="t" style="left:39px;top:285px;font-size:13.2px;color:#262626;transform:translateX(0.82px) scaleX(0.8977);">Последние созданные</span>
<span class="t" style="left:39px;top:313px;font-size:13.2px;color:#262626;transform:translateX(0.82px) scaleX(0.8914);">Решенные недавно</span>
<span class="t" style="left:39px;top:341px;font-size:13.2px;color:#262626;transform:translateX(0.90px) scaleX(0.9051);">Обновленные недавно</span>
<span class="t" style="left:199px;top:104px;font-size:15.4px;color:#1e1e1e;transform:translateX(0.68px) scaleX(0.9120);">ВСЕ ЗАДАЧИ</span>
<span class="t" style="left:200px;top:128px;font-size:11.7px;color:#1e1e1e;transform:translateX(0.03px) scaleX(0.9188);">Все задачи, зарегистрированные в системе</span>
<span class="t" style="left:490px;top:114px;font-size:13.2px;color:#fff;transform:translateX(0.69px) scaleX(0.8823);">Новая задача</span>
<span class="t" style="left:221px;top:170px;font-size:12.0px;color:#6a6a6a;transform:translateX(0.18px) scaleX(1.0024);">Тип</span>
<span class="t" style="left:260px;top:170px;font-size:12.0px;color:#6a6a6a;transform:translateX(0.38px) scaleX(1.0565);">ID</span>
<span class="t" style="left:330px;top:170px;font-size:12.0px;color:#6a6a6a;transform:translateX(0.83px) scaleX(0.9905);">Метка</span>
<span class="t" style="left:430px;top:170px;font-size:12.0px;color:#6a6a6a;transform:translateX(0.89px) scaleX(1.0152);">Приоритет</span>
<span class="t" style="left:531px;top:170px;font-size:12.0px;color:#6a6a6a;transform:translateX(0.21px) scaleX(0.9714);">Создано</span>
<span class="t" style="left:661px;top:170px;font-size:12.0px;color:#6a6a6a;transform:translateX(0.42px) scaleX(0.9837);">Автор</span>
<span class="t" style="left:810px;top:170px;font-size:12.0px;color:#6a6a6a;transform:translateX(0.99px) scaleX(0.9870);">Исполнитель</span>
<span class="t" style="left:960px;top:170px;font-size:12.0px;color:#6a6a6a;transform:translateX(0.56px) scaleX(1.0041);">Фигуранты</span>
<span class="t" style="left:1060px;top:170px;font-size:12.0px;color:#6a6a6a;transform:translateX(0.83px) scaleX(0.9131);">Статус</span>
<span class="t" style="left:1160px;top:170px;font-size:12.0px;color:#6a6a6a;transform:translateX(0.59px) scaleX(0.9359);">Задача</span>
<span class="t" style="left:1510px;top:170px;font-size:12.0px;color:#6a6a6a;transform:translateX(0.71px) scaleX(0.9947);">Подзадачи</span>
<span class="t" style="left:1590px;top:170px;font-size:12.0px;color:#6a6a6a;transform:translateX(0.75px) scaleX(0.9851);">R-Vision</span>
<span class="t" style="left:265px;top:196px;font-size:12.3px;color:#2e2e2e;transform:translateX(0.78px) scaleX(0.9161);">GEN-1</span>
<span class="t" style="left:347px;top:197px;font-size:12.3px;color:#2e2e2e;transform:translateX(0.38px) scaleX(0.9674);">Проверить</span>
<span class="t" style="left:446px;top:196px;font-size:12.3px;color:#2e2e2e;transform:translateX(0.76px) scaleX(0.9664);">Тривиальный</span>
<span class="t" style="left:535px;top:196px;font-size:12.3px;color:#2e2e2e;transform:translateX(0.65px) scaleX(0.9207);">09.03.22, 13:30:37</span>
<span class="t" style="left:696px;top:197px;font-size:12.3px;color:#2e2e2e;transform:translateX(0.46px) scaleX(0.9972);">Admin</span>
<span class="t" style="left:845px;top:197px;font-size:12.3px;color:#2e2e2e;transform:translateX(0.80px) scaleX(0.9461);">Савенко Жанна</span>
<span class="t" style="left:1085px;top:197px;font-size:12.3px;color:#fff;transform:translateX(0.41px) scaleX(0.9862);">Открыт</span>
<span class="t" style="left:1536px;top:197px;font-size:12.3px;color:#2e2e2e;transform:translateX(0.27px) scaleX(1.0694);">0/1</span>
<span class="t" style="left:265px;top:224px;font-size:12.3px;color:#2e2e2e;transform:translateX(0.78px) scaleX(0.9118);">GEN-2</span>
<div class="a" style="left:340px;top:0;width:86px;height:400px;overflow:hidden"><span class="t" style="left:7px;top:225px;font-size:12.3px;color:#2e2e2e;transform:translateX(0.40px) scaleX(0.9520);">Обратить внимание</span></div>
<span class="t" style="left:446px;top:224px;font-size:12.3px;color:#2e2e2e;transform:translateX(0.76px) scaleX(0.9664);">Тривиальный</span>
<span class="t" style="left:535px;top:224px;font-size:12.3px;color:#2e2e2e;transform:translateX(0.65px) scaleX(0.9229);">09.03.22, 16:20:18</span>
<span class="t" style="left:696px;top:225px;font-size:12.3px;color:#2e2e2e;transform:translateX(0.46px) scaleX(0.9972);">Admin</span>
<span class="t" style="left:845px;top:225px;font-size:12.3px;color:#2e2e2e;transform:translateX(0.80px) scaleX(0.9932);">Иванов Дмитрий</span>
<span class="t" style="left:1085px;top:225px;font-size:12.3px;color:#fff;transform:translateX(0.41px) scaleX(0.9862);">Открыт</span>
<span class="t" style="left:1537px;top:225px;font-size:12.3px;color:#2e2e2e;transform:translateX(0.15px) scaleX(1.0517);">0/0</span>
<span class="t" style="left:265px;top:252px;font-size:12.3px;color:#2e2e2e;transform:translateX(0.78px) scaleX(0.9142);">GEN-3</span>
<span class="t" style="left:446px;top:252px;font-size:12.3px;color:#2e2e2e;transform:translateX(0.76px) scaleX(0.9664);">Тривиальный</span>
<span class="t" style="left:535px;top:252px;font-size:12.3px;color:#2e2e2e;transform:translateX(0.65px) scaleX(0.9197);">05.04.22, 17:32:46</span>
<span class="t" style="left:696px;top:253px;font-size:12.3px;color:#2e2e2e;transform:translateX(0.46px) scaleX(0.9972);">Admin</span>
<span class="t" style="left:846px;top:253px;font-size:12.3px;color:#2e2e2e;transform:translateX(0.60px) scaleX(0.9796);">Admin</span>
<span class="t" style="left:1085px;top:253px;font-size:12.3px;color:#fff;transform:translateX(0.41px) scaleX(0.9862);">Открыт</span>
<span class="t" style="left:1537px;top:253px;font-size:12.3px;color:#2e2e2e;transform:translateX(0.15px) scaleX(1.0517);">0/0</span>
<span class="t" style="left:265px;top:280px;font-size:12.3px;color:#2e2e2e;transform:translateX(0.80px) scaleX(0.9087);">GEN-4</span>
<span class="t" style="left:346px;top:281px;font-size:12.3px;color:#2e2e2e;transform:translateX(0.93px) scaleX(0.9774);">Важно</span>
<span class="t" style="left:446px;top:280px;font-size:12.3px;color:#2e2e2e;transform:translateX(0.98px) scaleX(0.9734);">Высокий</span>
<span class="t" style="left:535px;top:280px;font-size:12.3px;color:#2e2e2e;transform:translateX(0.53px) scaleX(0.9220);">19.05.22, 13:30:49</span>
<span class="t" style="left:845px;top:281px;font-size:12.3px;color:#2e2e2e;transform:translateX(0.80px) scaleX(0.9932);">Иванов Дмитрий</span>
<span class="t" style="left:1081px;top:281px;font-size:12.3px;color:#fff;transform:translateX(0.82px) scaleX(0.9486);">В работе</span>
<span class="t" style="left:1537px;top:281px;font-size:12.3px;color:#2e2e2e;transform:translateX(0.15px) scaleX(1.0517);">0/0</span>
<span class="t" style="left:265px;top:308px;font-size:12.3px;color:#2e2e2e;transform:translateX(0.31px) scaleX(0.9536);">INC-1</span>
<span class="t" style="left:447px;top:308px;font-size:12.3px;color:#2e2e2e;transform:translateX(0.26px) scaleX(0.9590);">Средний</span>
<span class="t" style="left:535px;top:308px;font-size:12.3px;color:#2e2e2e;transform:translateX(0.65px) scaleX(0.9184);">03.08.22, 10:44:21</span>
<span class="t" style="left:696px;top:309px;font-size:12.3px;color:#2e2e2e;transform:translateX(0.46px) scaleX(0.9972);">Admin</span>
<span class="t" style="left:845px;top:309px;font-size:12.3px;color:#2e2e2e;transform:translateX(0.80px) scaleX(0.9461);">Савенко Жанна</span>
<span class="t" style="left:1085px;top:309px;font-size:12.3px;color:#fff;transform:translateX(0.41px) scaleX(0.9862);">Открыт</span>
<span class="t" style="left:265px;top:336px;font-size:12.3px;color:#2e2e2e;transform:translateX(0.78px) scaleX(0.9107);">GEN-5</span>
<span class="t" style="left:446px;top:336px;font-size:12.3px;color:#2e2e2e;transform:translateX(0.76px) scaleX(0.9664);">Тривиальный</span>
<span class="t" style="left:535px;top:336px;font-size:12.3px;color:#2e2e2e;transform:translateX(0.65px) scaleX(0.9194);">03.08.22, 10:45:33</span>
<span class="t" style="left:696px;top:337px;font-size:12.3px;color:#2e2e2e;transform:translateX(0.46px) scaleX(0.9972);">Admin</span>
<span class="t" style="left:845px;top:337px;font-size:12.3px;color:#2e2e2e;transform:translateX(0.80px) scaleX(0.9932);">Иванов Дмитрий</span>
<span class="t" style="left:1073px;top:337px;font-size:12.3px;color:#fff;transform:translateX(0.90px) scaleX(0.9854);">Выполнено</span>
<span class="t" style="left:1161px;top:196px;font-size:12.3px;color:#5c5c5c;transform:translateX(0.13px) scaleX(0.9344);">Новая задача</span>
<span class="t" style="left:1161px;top:224px;font-size:12.3px;color:#5c5c5c;transform:translateX(0.02px) scaleX(0.9459);">GEN-1 / Новая задача</span>
<span class="t" style="left:1161px;top:252px;font-size:12.3px;color:#5c5c5c;transform:translateX(0.32px) scaleX(0.9631);">Изменение политики аудита</span>
<span class="t" style="left:1161px;top:280px;font-size:12.3px;color:#5c5c5c;transform:translateX(0.19px) scaleX(0.9744);">Операции над учетной записью</span>
<span class="t" style="left:1161px;top:308px;font-size:12.3px;color:#5c5c5c;transform:translateX(0.44px) scaleX(0.9728);">Контроль переписки в Telegram</span>
<span class="t" style="left:1161px;top:336px;font-size:12.3px;color:#5c5c5c;transform:translateX(0.38px) scaleX(0.9496);">Разобрать письма карантина</span>
<span class="t" style="left:194px;top:873px;font-size:12.6px;color:#1e1e1e;transform:translateX(0.86px) scaleX(0.9474);">Загружено записей: 1 - 6 из 6</span>
<span class="t" style="left:1324px;top:873px;font-size:12.6px;color:#1e1e1e;transform:translateX(0.32px) scaleX(0.9364);">Показать записей</span>
<span class="t" style="left:1433px;top:873px;font-size:12.6px;color:#1e1e1e;transform:translateX(0.26px) scaleX(0.8981);">10</span>
<span class="t" style="left:1540px;top:873px;font-size:12.6px;color:#1e1e1e;transform:translateX(0.93px) scaleX(0.8916);">Стр.</span>
<span class="t" style="left:1574px;top:873px;font-size:12.6px;color:#b0b0b0;transform:translateX(0.85px) scaleX(0.7377);">1</span>
<span class="t" style="left:1620px;top:873px;font-size:12.6px;color:#1e1e1e;transform:translateX(0.90px) scaleX(0.9061);">из 1</span>
<span class="t" style="left:1528px;top:302px;font-size:12.2px;color:#2a2a2a;transform:translateX(0.63px) scaleX(0.9465);">Создать подзадачу</span>
<span class="t" style="left:1528px;top:337px;font-size:12.2px;color:#2a2a2a;transform:translateX(0.83px) scaleX(0.9586);">В статус "Отклонено"</span>
<span class="t" style="left:1528px;top:361px;font-size:12.2px;color:#2a2a2a;transform:translateX(0.83px) scaleX(0.9515);">В статус "Выполнено"</span>
<span class="t" style="left:1528px;top:396px;font-size:12.2px;color:#2a2a2a;transform:translateX(0.84px) scaleX(0.9627);">Назначить исполнителя</span>
<span class="t" style="left:1528px;top:420px;font-size:12.2px;color:#2a2a2a;transform:translateX(0.81px) scaleX(0.9786);">Комментировать</span>
<span class="t" style="left:1528px;top:444px;font-size:12.2px;color:#2a2a2a;transform:translateX(0.67px) scaleX(0.9358);">Стать наблюдателем</span>
<span class="t" style="left:1528px;top:468px;font-size:12.2px;color:#2a2a2a;transform:translateX(0.84px) scaleX(0.9478);">Наблюдатели</span>
<span class="t" style="left:1528px;top:492px;font-size:12.2px;color:#2a2a2a;transform:translateX(0.84px) scaleX(0.9689);">Преобразовать в подзадачу</span>
<span class="t" style="left:1528px;top:527px;font-size:12.2px;color:#2a2a2a;transform:translateX(0.51px) scaleX(0.9264);">Удалить</span>
<span class="t" style="left:1528px;top:562px;font-size:12.2px;color:#2a2a2a;transform:translateX(0.61px) scaleX(0.9610);">Создать инцидент в R-Vision</span>
<!-- cursor -->
<svg width="17" height="27" viewBox="0 0 17 27" style="left:1651px;top:290px"><defs><linearGradient id="cg" x1="0" y1="0" x2="1" y2="1"><stop offset="0" stop-color="#fff"/><stop offset=".45" stop-color="#f0f0f0"/><stop offset="1" stop-color="#a6a6a6"/></linearGradient></defs>
<path d="M1 1.2V20.6L5.4 16.6L9.2 25.2L12.6 23.8L8.9 15.4H14.8Z" fill="url(#cg)" stroke="#000" stroke-width="1.2" stroke-linejoin="round"/></svg>
<div id="bl" class="a"></div><div id="br" class="a"></div><div id="bb" class="a"></div><div id="wl" class="a"></div><div id="wr" class="a"></div><div id="wb" class="a"></div>
</body>
</html>
